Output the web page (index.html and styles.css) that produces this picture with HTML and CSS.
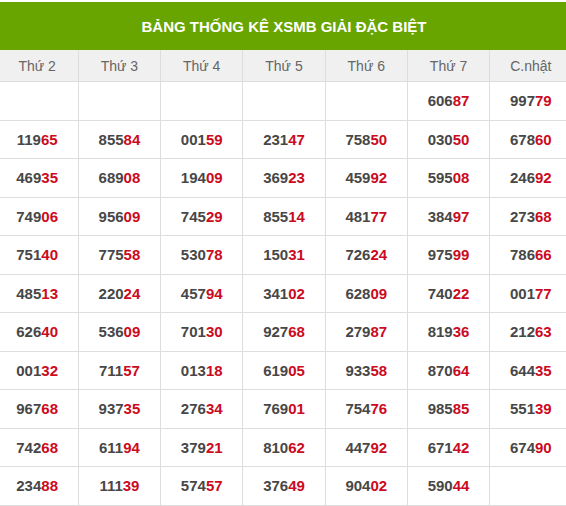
FILE: index.html
```html
<!DOCTYPE html>
<html lang="vi">
<head>
<meta charset="utf-8">
<title>Bảng thống kê XSMB giải đặc biệt</title>
<link rel="stylesheet" href="styles.css">
</head>
<body>
<div class="wrap">
<table class="stats">
<thead>
<tr><th class="title" colspan="7">BẢNG THỐNG KÊ XSMB GIẢI ĐẶC BIỆT</th></tr>
<tr class="days"><th>Thứ 2</th><th>Thứ 3</th><th>Thứ 4</th><th>Thứ 5</th><th>Thứ 6</th><th>Thứ 7</th><th>C.nhật</th></tr>
</thead>
<tbody>
<tr><td></td><td></td><td></td><td></td><td></td><td>606<span class="r">87</span></td><td>997<span class="r">79</span></td></tr>
<tr><td>119<span class="r">65</span></td><td>855<span class="r">84</span></td><td>001<span class="r">59</span></td><td>231<span class="r">47</span></td><td>758<span class="r">50</span></td><td>030<span class="r">50</span></td><td>678<span class="r">60</span></td></tr>
<tr><td>469<span class="r">35</span></td><td>689<span class="r">08</span></td><td>194<span class="r">09</span></td><td>369<span class="r">23</span></td><td>459<span class="r">92</span></td><td>595<span class="r">08</span></td><td>246<span class="r">92</span></td></tr>
<tr><td>749<span class="r">06</span></td><td>956<span class="r">09</span></td><td>745<span class="r">29</span></td><td>855<span class="r">14</span></td><td>481<span class="r">77</span></td><td>384<span class="r">97</span></td><td>273<span class="r">68</span></td></tr>
<tr><td>751<span class="r">40</span></td><td>775<span class="r">58</span></td><td>530<span class="r">78</span></td><td>150<span class="r">31</span></td><td>726<span class="r">24</span></td><td>975<span class="r">99</span></td><td>786<span class="r">66</span></td></tr>
<tr><td>485<span class="r">13</span></td><td>220<span class="r">24</span></td><td>457<span class="r">94</span></td><td>341<span class="r">02</span></td><td>628<span class="r">09</span></td><td>740<span class="r">22</span></td><td>001<span class="r">77</span></td></tr>
<tr><td>626<span class="r">40</span></td><td>536<span class="r">09</span></td><td>701<span class="r">30</span></td><td>927<span class="r">68</span></td><td>279<span class="r">87</span></td><td>819<span class="r">36</span></td><td>212<span class="r">63</span></td></tr>
<tr><td>001<span class="r">32</span></td><td>711<span class="r">57</span></td><td>013<span class="r">18</span></td><td>619<span class="r">05</span></td><td>933<span class="r">58</span></td><td>870<span class="r">64</span></td><td>644<span class="r">35</span></td></tr>
<tr><td>967<span class="r">68</span></td><td>937<span class="r">35</span></td><td>276<span class="r">34</span></td><td>769<span class="r">01</span></td><td>754<span class="r">76</span></td><td>985<span class="r">85</span></td><td>551<span class="r">39</span></td></tr>
<tr><td>742<span class="r">68</span></td><td>611<span class="r">94</span></td><td>379<span class="r">21</span></td><td>810<span class="r">62</span></td><td>447<span class="r">92</span></td><td>671<span class="r">42</span></td><td>674<span class="r">90</span></td></tr>
<tr><td>234<span class="r">88</span></td><td>111<span class="r">39</span></td><td>574<span class="r">57</span></td><td>376<span class="r">49</span></td><td>904<span class="r">02</span></td><td>590<span class="r">44</span></td><td></td></tr>
</tbody>
</table>
</div>
</body>
</html>
```
FILE: styles.css
```css
html, body {
  margin: 0;
  padding: 0;
  background: #fff;
  overflow: hidden;
}
.wrap {
  padding-top: 2px;
  font-family: "Liberation Sans", Arial, sans-serif;
}
.stats {
  width: 577px;
  margin-left: -4.5px;
  border-collapse: collapse;
  table-layout: fixed;
}
.stats th.title {
  background: #68a500;
  color: #fff;
  font-size: 15px;
  font-weight: bold;
  height: 48px;
  padding: 0;
  border: none;
  text-align: center;
}
.days th {
  background: #f0f0f0;
  color: #666;
  font-weight: normal;
  font-size: 14px;
  height: 31px;
  padding: 0;
  border: 1px solid #ddd;
  border-top: none;
  text-align: center;
}
.stats td {
  height: 37.5px;
  padding: 0;
  border: 1px solid #ddd;
  text-align: center;
  font-size: 15px;
  font-weight: bold;
  color: #474747;
}
.r {
  color: #cc0a20;
}
```
